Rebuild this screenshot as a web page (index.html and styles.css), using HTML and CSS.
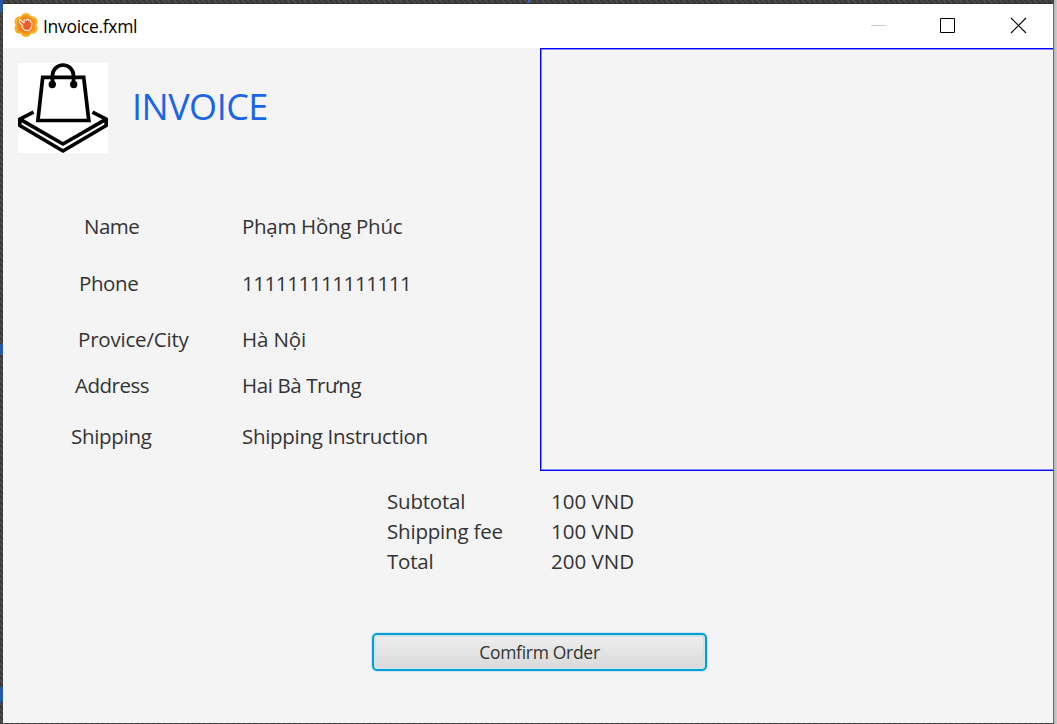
FILE: index.html
```html
<!DOCTYPE html>
<html lang="vi">
<head>
<meta charset="utf-8">
<title>Invoice.fxml</title>
<link rel="stylesheet" href="styles.css">
</head>
<body>
<div class="desktop">
  <div class="window">
    <header class="titlebar">
      <svg class="app-icon" width="26" height="26" viewBox="0 0 26 26">
        <g fill="#f6b221"><circle cx="13" cy="6.500" r="5.500"/><circle cx="19" cy="9.700" r="5.500"/><circle cx="19" cy="16.300" r="5.500"/><circle cx="13" cy="19.500" r="5.500"/><circle cx="7" cy="16.300" r="5.500"/><circle cx="7" cy="9.700" r="5.500"/></g>
        <path d="M13 2.500 22 8v10l-9 5.500L4 18V8z" fill="#f7941d"/>
        <circle cx="13" cy="13" r="7.500" fill="#f47a20"/>
        <path d="M6.500 7.500 11 11l.2-3.500 2 .8 1-1 1.700 1 1.500 0 .5 2 1.100 1-.8 4.300-2.400 3-4.300-.5-3-3.600 1.500-.5-3.500-3.500z" fill="#f15a24" stroke="#fff3dc" stroke-width="1.100" stroke-linejoin="round"/>
      </svg>
      <span class="window-title">Invoice.fxml</span>
      <svg class="controls" width="160" height="20" viewBox="0 0 160 20">
        <path d="M0 10.500h15" stroke="#ccc"/>
        <path d="M69.500 3.500h14v14h-14z" fill="none" stroke="#000"/>
        <path d="M140 3l15 15M155 3l-15 15" stroke="#000" stroke-width="1.100"/>
      </svg>
    </header>
    <main class="content">
      <div class="upper">
        <section class="customer">
          <div class="brand">
            <svg class="logo" width="90" height="90" viewBox="0 0 90 90">
              <path fill="#fff" d="M0 0h90v90H0z"/>
              <g fill="none" stroke="#000" stroke-width="3.700">
                <path d="M24.700 14.300h41l5.100 43.200H19.900z"/>
                <path d="M34.500 21V12.500a10.500 10.500 0 0 1 21 0V21"/>
                <path stroke-linejoin="round" d="M15.500 49.200 1.800 56.200 45 81l43.200-24.800-13.700-7M1.800 56v6.500L45 88l43.200-25.500V56"/>
              </g>
              <circle cx="34.300" cy="21.500" r="3.700"/><circle cx="55.700" cy="21.500" r="3.700"/>
            </svg>
            <h1 class="heading">INVOICE</h1>
          </div>
          <div class="details">
            <span class="label name">Name</span><span class="value v-name">Phạm Hồng Phúc</span>
            <span class="label phone">Phone</span><span class="value v-phone">111111111111111</span>
            <span class="label city">Provice/City</span><span class="value v-city">Hà Nội</span>
            <span class="label address">Address</span><span class="value v-address">Hai Bà Trưng</span>
            <span class="label shipping">Shipping</span><span class="value v-shipping">Shipping Instruction</span>
          </div>
        </section>
        <section class="items"></section>
      </div>
      <div class="totals">
        <span>Subtotal</span><span class="amount">100 VND</span>
        <span>Shipping fee</span><span class="amount">100 VND</span>
        <span>Total</span><span class="amount">200 VND</span>
      </div>
      <button class="confirm">Comfirm Order</button>
    </main>
  </div>
  <div class="edge"></div>
</div>
</body>
</html>
```
FILE: styles.css
```css
* { box-sizing: border-box; }
body { margin: 0; width: 1057px; height: 724px; overflow: hidden; font-family: "Open Sans", "Noto Sans", sans-serif; color: #333; }
.desktop { display: flex; width: 1057px; height: 724px; padding-top: 3px; background: linear-gradient(90deg, transparent 528px, #2868c8 528px, #2868c8 530px, transparent 530px) 0 0 / 100% 3px no-repeat, linear-gradient(#2459a8, #2459a8) 0 344px / 3px 11px no-repeat, linear-gradient(#2459a8, #2459a8) 0 687px / 3px 15px no-repeat, linear-gradient(#2459a8, #2459a8) 0 0 / 3px 12px no-repeat, repeating-linear-gradient(45deg, #383838 0 2px, #4a4a4a 2px 4px); }
.window { width: 1051px; height: 720px; margin-left: 3px; background: #f4f4f4; border-top: 1px solid #333; border-right: 1px solid #6e6e6e; flex: none; }
.edge { width: 3px; height: 724px; margin-top: -3px; background: linear-gradient(90deg, #b5b5b5, #ccc); }
.titlebar { display: flex; align-items: center; height: 44px; padding-left: 10px; background: #fff; }
.app-icon { flex: none; margin-top: -2px; }
.window-title { margin-left: 4px; font-size: 17.500px; letter-spacing: -.3px; color: #000; line-height: 26px; }
.controls { margin: -2px 22px 0 auto; }
.upper { display: flex; height: 423px; }
.customer { width: 537px; flex: none; }
.items { flex: 1; border: 1px solid #00f; border-right: 0; box-shadow: inset 1px 1px 0 #8a8afa, inset 0 -1px 0 #8a8afa; }
.brand { display: flex; padding: 15px 0 0 15px; height: 163px; }
.logo { flex: none; }
.heading { margin: 17px 0 0 24px; font-size: 36px; line-height: 54px; font-weight: 400; color: #1a64e8; letter-spacing: -.5px; }
.details { display: grid; grid-template-columns: 239px 1fr; grid-template-rows: 57px 56px 46px 51px 30px; font-size: 20.500px; line-height: 30px; white-space: nowrap; letter-spacing: -.3px; }
.details span, .totals span { justify-self: start; }
.name { margin-left: 81px; letter-spacing: -.5px; }
.phone { margin-left: 76px; letter-spacing: -.4px; }
.city { margin-left: 75px; letter-spacing: -.2px; }
.address { margin-left: 72px; letter-spacing: -.5px; }
.shipping { margin-left: 68px; }
.v-phone { letter-spacing: -.43px; }
.v-city { letter-spacing: -.1px; }
.v-address { letter-spacing: -.4px; }
.totals { display: grid; grid-template-columns: 164px auto; grid-auto-rows: 30px; justify-content: start; margin: 15px 0 0 384px; font-size: 20.500px; line-height: 30px; letter-spacing: -.2px; white-space: nowrap; }
.amount { letter-spacing: 0; }
.confirm { display: block; width: 335px; height: 38px; margin: 57px 0 0 369px; padding: 0; border: 2px solid #039ed3; border-radius: 5px; background: linear-gradient(#efefef, #d9d9d9); box-shadow: 0 0 0 1px #cce7ef, inset 0 0 0 1px #cae6ee, inset 0 0 0 2px #d3dfe1; font: 17.500px/34px "Open Sans", sans-serif; letter-spacing: -.3px; color: #333; }
```
